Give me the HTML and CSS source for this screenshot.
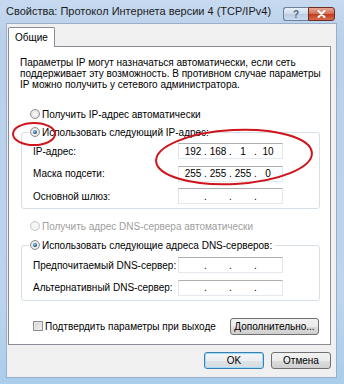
FILE: index.html
```html
<!DOCTYPE html>
<html lang="ru">
<head>
  <meta charset="UTF-8" />
  <title>Свойства: Протокол Интернета версии 4 (TCP/IPv4)</title>
  <link rel="stylesheet" href="styles.css">
</head>
<body>

  <div class="window">
    <!-- заголовок окна -->
    <div class="titlebar">
      <span class="title">Свойства: Протокол Интернета версии 4 (TCP/IPv4)</span>
      <div class="caption-buttons">
        <span class="cap-btn help">?</span>
        <span class="cap-btn close">
          <svg width="9" height="8" viewBox="0 0 9 8"><path d="M1.5 1 L7.5 7 M7.5 1 L1.5 7" stroke="#fff" stroke-width="2" stroke-linecap="round"/></svg>
        </span>
      </div>
    </div>

    <div class="client">
      <div class="tabs">
        <div class="tab">Общие</div>
      </div>

      <div class="panel">
        <p class="intro">Параметры IP могут назначаться автоматически, если сеть<br>поддерживает эту возможность. В противном случае параметры<br>IP можно получить у сетевого администратора.</p>

        <div class="option"><span class="radio"></span>Получить IP-адрес автоматически</div>

        <fieldset class="group">
          <legend><span class="option-in"><span class="radio checked"></span>Использовать следующий IP-адрес:</span></legend>
          <div class="fields ip-fields">
            <span>IP-адрес:</span>
            <div class="ip-box"><span class="oct">192</span><span class="dot">.</span><span class="oct">168</span><span class="dot">.</span><span class="oct">1</span><span class="dot">.</span><span class="oct">10</span></div>
            <span>Маска подсети:</span>
            <div class="ip-box"><span class="oct">255</span><span class="dot">.</span><span class="oct">255</span><span class="dot">.</span><span class="oct">255</span><span class="dot">.</span><span class="oct">0</span></div>
            <span>Основной шлюз:</span>
            <div class="ip-box"><span class="oct"></span><span class="dot">.</span><span class="oct"></span><span class="dot">.</span><span class="oct"></span><span class="dot">.</span><span class="oct"></span></div>
          </div>
        </fieldset>

        <div class="option option-dns disabled"><span class="radio"></span>Получить адрес DNS-сервера автоматически</div>

        <fieldset class="group">
          <legend><span class="option-in"><span class="radio checked"></span>Использовать следующие адреса DNS-серверов:</span></legend>
          <div class="fields dns-fields">
            <span>Предпочитаемый DNS-сервер:</span>
            <div class="ip-box"><span class="oct"></span><span class="dot">.</span><span class="oct"></span><span class="dot">.</span><span class="oct"></span><span class="dot">.</span><span class="oct"></span></div>
            <span>Альтернативный DNS-сервер:</span>
            <div class="ip-box"><span class="oct"></span><span class="dot">.</span><span class="oct"></span><span class="dot">.</span><span class="oct"></span><span class="dot">.</span><span class="oct"></span></div>
          </div>
        </fieldset>

        <div class="panel-foot">
          <div class="check-row"><span class="checkbox"></span>Подтвердить параметры при выходе</div>
          <button class="btn btn-wide">Дополнительно...</button>
        </div>
      </div>

      <div class="dialog-buttons">
        <button class="btn default">OK</button>
        <button class="btn">Отмена</button>
      </div>
    </div>

    <!-- красные пометки поверх окна -->
    <svg class="marks" width="344" height="384" viewBox="0 0 344 384">
      <ellipse cx="34" cy="134" rx="21" ry="11" fill="none" stroke="#d0141c" stroke-width="2"/>
      <ellipse cx="234" cy="157" rx="78" ry="27" transform="rotate(-3 234 157)" fill="none" stroke="#d0141c" stroke-width="2"/>
    </svg>
  </div>

</body>
</html>
```

FILE: styles.css
```css
* {
  box-sizing: border-box;
}
body {
  margin: 0;
  font-family: 'Liberation Sans', Arial, sans-serif;
  font-size: 10px;
  color: #000;
  background-color: #ffffff;
}
.window {
  position: relative;
  width: 344px;
  height: 384px;
  padding: 0 7px 6px 6px;
  display: flex;
  flex-direction: column;
  background: linear-gradient(#c6d9ef, #b9d0ea 40px, #bdd4ee 300px, #a9cdea);
}
.titlebar {
  height: 23px;
  display: flex;
  justify-content: space-between;
}
.title {
  font-size: 11px;
  line-height: 23px;
  color: #1b1b1b;
}
.caption-buttons {
  display: flex;
  margin-top: 7px;
  margin-right: 2px;
  height: 14px;
}
.cap-btn {
  display: flex;
  align-items: center;
  justify-content: center;
  height: 14px;
  border: 1px solid #6f8199;
}
.cap-btn.help {
  width: 25px;
  border-right: none;
  border-radius: 3px 0 0 3px;
  background: linear-gradient(#e8eff8, #cfdcec 50%, #bccde2 51%, #cadcef);
  color: #55677f;
  font-weight: bold;
  font-size: 10px;
}
.cap-btn.close {
  width: 27px;
  border-color: #6b2d1f;
  border-radius: 0 3px 3px 0;
  background: linear-gradient(#e9a796, #d36b52 50%, #c13a1c 51%, #d66b4e);
}
.client {
  flex: 1;
  padding: 3px 5px 0 1px;
  background-color: #f0f0f0;
  border: 1px solid #98aecb;
}
.tabs {
  display: flex;
}
.tab {
  position: relative;
  z-index: 1;
  height: 20px;
  margin-bottom: -1px;
  padding: 0 6px;
  line-height: 19px;
  background-color: #fff;
  border: 1px solid #898c95;
  border-bottom: none;
  border-radius: 2px 2px 0 0;
}
.panel {
  padding: 10px 10px 9px 12px;
  background-color: #fff;
  border: 1px solid #898c95;
}
.intro {
  margin: 0 0 0 -1px;
  line-height: 11px;
  white-space: nowrap;
}
.option,
.option-in {
  display: flex;
  align-items: center;
  gap: 2px;
  height: 14px;
}
.option {
  margin: 17px 0 0 9px;
}
.option-dns {
  margin-top: 10px;
}
.disabled {
  color: #a0a0a0;
}
.radio {
  flex: none;
  position: relative;
  width: 10px;
  height: 10px;
  border: 1px solid #8e8f8f;
  border-radius: 50%;
  background: radial-gradient(circle, #f6f6f6 20%, #d8d8d8);
}
.radio.checked::after {
  content: "";
  position: absolute;
  top: 2px;
  left: 2px;
  width: 4px;
  height: 4px;
  border-radius: 50%;
  background: radial-gradient(circle at 40% 35%, #8fd0f5, #12406e 75%);
}
.disabled .radio {
  border-color: #c6c6c6;
  background: #f4f4f4;
}
.group {
  margin: 4px 0 0 0;
  padding: 0 36px 4px 11px;
  min-width: 0;
  border: 1px solid #d5dfe5;
  border-radius: 3px;
}
.group legend {
  margin-left: -4px;
  padding: 0 3px 0 1px;
}
.group + .option-dns + .group {
  margin-top: 5px;
}
.fields {
  display: grid;
  grid-template-columns: 1fr 105px;
  grid-auto-rows: 16px;
  row-gap: 6.5px;
  align-items: center;
  padding-top: 4px;
}
.dns-fields {
  padding-top: 5px;
}
.ip-box {
  display: flex;
  align-items: center;
  height: 16px;
  padding: 0 3px;
  background-color: #fff;
  border: 1px solid;
  border-color: #abadb3 #e3e9ef #e3e9ef #e2e3ea;
}
.oct {
  width: 22px;
  text-align: center;
}
.dot {
  width: 3px;
  text-align: center;
}
.panel-foot {
  display: flex;
  justify-content: space-between;
  align-items: center;
  margin-top: 17px;
}
.check-row {
  display: flex;
  align-items: center;
  gap: 2px;
  margin-left: 12px;
}
.checkbox {
  width: 10px;
  height: 10px;
  border: 1px solid #8e8f8f;
  background: linear-gradient(135deg, #d3d3d3, #f3f3f3);
  box-shadow: inset 0 0 0 1px #e6e6e6;
}
.btn {
  width: 60px;
  height: 17px;
  padding: 0;
  font: inherit;
  color: #000;
  border: 1px solid #707070;
  border-radius: 3px;
  background: linear-gradient(#f2f2f2, #ebebeb 50%, #dddddd 51%, #cfcfcf);
}
.btn-wide {
  width: 89px;
  margin-right: 1px;
}
.btn.default {
  border-color: #3c7fb1;
  box-shadow: inset 0 0 0 1px #9fdcf8;
  background: linear-gradient(#f4f6f8, #ebeef1 50%, #dfe3e7 51%, #d6dbe0);
}
.dialog-buttons {
  display: flex;
  justify-content: flex-end;
  gap: 7px;
  margin-top: 7px;
}
.marks {
  position: absolute;
  top: 0;
  left: 0;
  pointer-events: none;
}
```
